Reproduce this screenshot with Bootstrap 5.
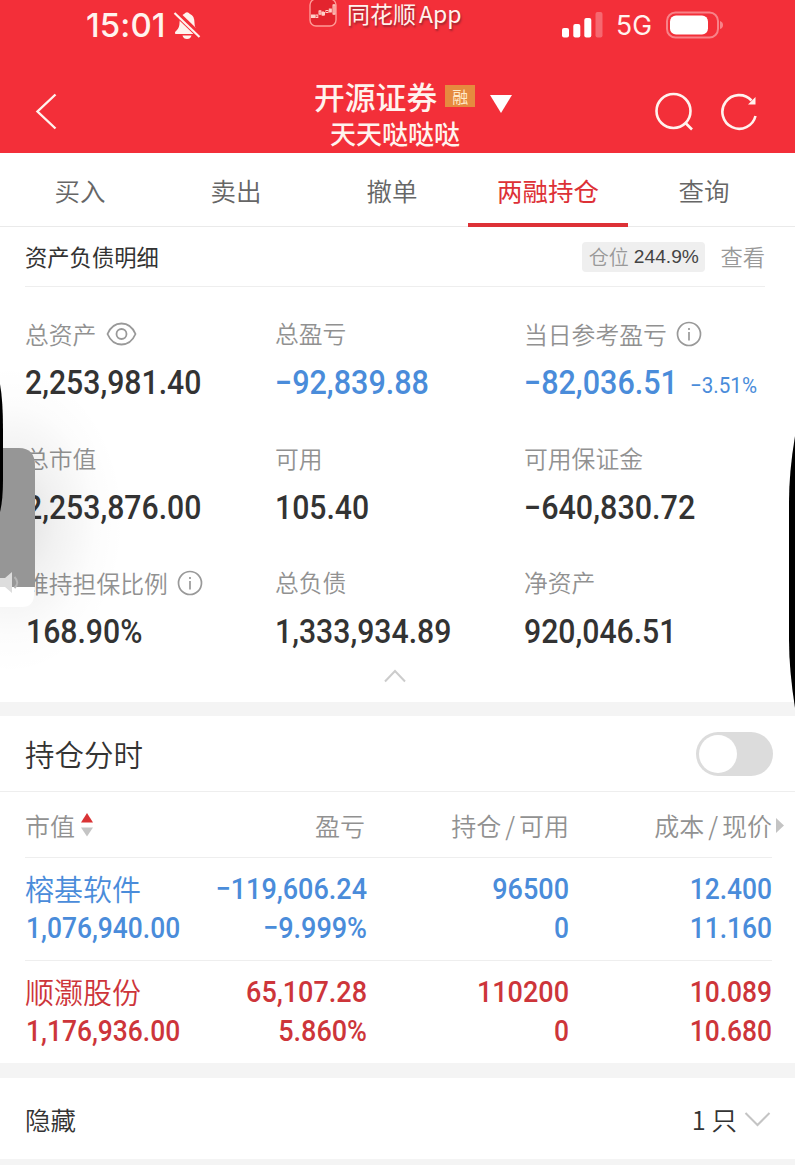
<!DOCTYPE html>
<html lang="zh-CN">
<head>
<meta charset="utf-8">
<meta name="viewport" content="width=device-width, initial-scale=1">
<title>两融持仓</title>
<link href="https://cdn.jsdelivr.net/npm/bootstrap@5.3.0/dist/css/bootstrap.min.css" rel="stylesheet">
<style>
body{font-family:"Liberation Sans","Noto Sans CJK SC",sans-serif;color:#333;background:#fff;height:1165px;line-height:1;overflow:hidden}
svg{display:block;flex:none}
.cjk{font-family:"Noto Sans CJK SC",sans-serif}
.top-area{height:153px;background:#f32f39;color:#fff3ee}
.status{height:50px;padding:0 71px 0 86px}
.clock{font:500 33px/50px Inter,sans-serif;letter-spacing:.1px}
.net{font:400 26.5px/50px Inter,sans-serif}
.watermark{left:309px;top:0;height:27px;font-size:23px;text-shadow:1px 2px 2px #9b2530}
.bar-main{height:103px;padding:0 37px 0 35px}
.broker{font-size:30.8px;font-weight:500;line-height:34px}
.tag{width:30px;height:22px;background:#e68a3f;font-size:16px;line-height:22px;color:#ffe9c8}
.account{font-size:26px;font-weight:500;line-height:30px;padding:4px 0 0 16px}
.tabs{height:74px;padding-left:2px;border-bottom:1px solid #eaeaea}
.tab-item{width:156px;font-size:25.5px;color:#666;line-height:74px;font-weight:350}
.tab-item.active{color:#dd3136;font-weight:400}
.tab-item.active::after{content:"";position:absolute;left:-2px;width:160px;height:4px;bottom:-1px;background:#dd3136}
.sum-head{height:60px;margin:0 30px 0 25px;border-bottom:1px solid #eee;font-size:22.3px}
.pos-tag{height:30px;width:123px;background:#efefef;border-radius:4px;font-size:20px;color:#999;font-weight:350}
.pos-tag .pct{font:19.2px/30px "Liberation Sans",sans-serif;color:#444}
.metrics{display:grid;grid-template-columns:250px 249px 1fr;grid-auto-rows:124.6px;padding:29px 0 0 25px;height:378px}
.metric-name{font-size:23.8px;line-height:34px;color:#919191;font-weight:350;height:36px}
.num{font-family:Roboto,sans-serif;font-weight:500;display:inline-block;transform:scaleX(.915);transform-origin:0 50%;white-space:nowrap}
.num.big{font-size:33px;line-height:36px;margin-top:13px}
.num.big.neg{transform:scaleX(.925)}
.num.small-pct{font-size:22.5px;line-height:36px;font-weight:400;margin-top:15px}
.fold{height:37px}
.band{background:#f4f4f4}
.blue{color:#4a8cda}
.red{color:#cd353a}
.toggle-row{height:76px;padding:0 22px 0 25px;border-bottom:1px solid #eee;font-size:29.5px;font-weight:350}
.toggle{width:77px;height:44px;border-radius:22px;background:#dcdcdc;padding:3px}
.knob{width:38px;height:38px;border-radius:50%;background:#fff}
.hold{display:grid;grid-template-columns:170px 172px 202px 203px;margin:0 23px 0 25px;border-bottom:1px solid #eee}
.hold>div{text-align:right}
.hold>div:first-child{text-align:left}
.hold-head{height:66px;font-size:25px;line-height:66px;color:#919191;font-weight:350}
.hold-row{height:103px;padding-top:11px}
.hold-row .num{font-size:30px;transform:scaleX(.88);transform-origin:100% 50%;line-height:39px;display:block}
.hold-row .num.l{transform-origin:0 50%;margin-left:1px}
.hold-row .num.wide{transform:scaleX(.9)}
.stock{font-size:29px;line-height:39px;height:39px;font-weight:350}
.last-row{height:81px;padding:0 24px 0 25px;font-size:25.5px;font-weight:350}
.edge{left:0;top:350px}
.edge-r{right:0;top:420px}
</style>
</head>
<body class="position-relative">
<header class="top-area cjk">
  <div class="status d-flex justify-content-between align-items-center">
    <div class="d-flex align-items-center">
      <span class="clock">15:01</span>
      <svg style="margin-left:6px" width="30" height="30" viewBox="0 0 30 30"><path d="M3.500 24Q2 22.500 4.500 20.500Q7.500 18 7.500 13C7.500 8 9 5 12 4Q15 .5 18 4C21 5 22.500 8 22.500 13Q22.500 18 25.500 20.500Q28 22.500 26.500 24Z" fill="currentColor"/><path d="M10.500 25.500H19.500Q18.500 29 15 29T10.500 25.500Z" fill="currentColor"/><path d="M2.500 1.500L28.500 26.500" stroke="#f32f39" stroke-width="6"/><path d="M2.500 3L27.500 27" stroke="currentColor" stroke-width="2.200"/></svg>
    </div>
    <div class="d-flex align-items-center">
      <svg width="42" height="26" viewBox="0 0 42 26" fill="#fff"><rect x="0" y="16" width="7" height="9.500" rx="2"/><rect x="11.300" y="12" width="7" height="13.500" rx="2"/><rect x="22.300" y="6" width="7" height="19.500" rx="2"/><rect x="33.500" y="0" width="7" height="25.500" rx="2" opacity=".28"/></svg>
      <span class="net ps-1" style="margin:0 14px 0 8px">5G</span>
      <svg width="58" height="28" viewBox="0 0 58 28"><rect x="1" y="1.500" width="51" height="25" rx="8.500" fill="none" stroke="#fff" stroke-width="2" opacity=".4"/><rect x="4" y="4.500" width="38" height="19" rx="6" fill="#fff"/><path d="M54 10Q57 11 57 14T54 18Z" fill="#fff" opacity=".4"/></svg>
    </div>
  </div>
  <div class="watermark position-absolute d-flex align-items-center">
    <svg width="28" height="28" viewBox="0 0 28 28" fill="none" stroke="#ffd0c8"><rect x="1" y="-1" width="26" height="27" rx="6" fill="#e3242e" stroke="#ff9a96" stroke-width="1.400"/><path d="M3 16.500H6M25 4V15M14 11V16M11 10V15" stroke-width="1"/><rect x="2.500" y="15" width="3" height="2.500" fill="#ffd0c8"/><rect x="6.800" y="15" width="2" height="2.500"/><rect x="10" y="11" width="2" height="3"/><rect x="13" y="12.500" width="2.500" height="2.500" fill="#ffd0c8"/><rect x="17" y="10.500" width="2" height="2"/><rect x="20.300" y="9" width="2" height="3" fill="#ffd0c8"/><rect x="24" y="5" width="2" height="9"/></svg>
    <span style="margin-left:10px;line-height:27px;white-space:nowrap">同花顺<span style="margin-left:3px">App</span></span>
  </div>
  <div class="bar-main d-flex justify-content-between position-relative">
    <svg class="mt-5" width="24" height="40" viewBox="0 0 24 40" style="transform:translateY(-7px)"><path d="M20.500 3.500L2.500 20.500L20.500 37.500" fill="none" stroke="currentColor" stroke-width="2.400"/></svg>
    <div class="position-absolute start-0 top-0 pt-4" style="padding-left:314px">
      <div class="d-flex align-items-center mt-1" style="gap:8px">
        <span class="broker">开源证券</span><span class="tag text-center">融</span>
        <svg style="margin:16px 0 0 6px" width="24" height="20" viewBox="0 0 24 20"><path d="M1 1H23L12 19Z" fill="#fff"/></svg>
      </div>
      <div class="account">天天哒哒哒</div>
    </div>
    <div class="d-flex pt-5" style="gap:26px">
      <svg width="40" height="40" viewBox="0 0 40 40" fill="none" stroke="currentColor" stroke-width="2.600" style="margin-top:-6px"><circle cx="19.500" cy="19" r="17"/><path d="M31.500 31L38 37.500"/></svg>
      <svg width="38" height="40" viewBox="0 0 38 40" fill="none" stroke="currentColor" stroke-width="2.600" style="margin-top:-6px"><path d="M35.500 24A16.800 16.800 0 1 1 31.500 8.500"/><path d="M35.500 5V12.500H28Z" fill="currentColor" stroke="none"/></svg>
    </div>
  </div>
</header>

<nav class="tabs d-flex text-center cjk">
  <div class="tab-item">买入</div><div class="tab-item">卖出</div><div class="tab-item">撤单</div>
  <div class="tab-item active position-relative">两融持仓</div><div class="tab-item">查询</div>
</nav>

<section>
  <div class="sum-head d-flex align-items-center cjk">
    <span>资产负债明细</span>
    <span class="pos-tag ms-auto d-flex align-items-center justify-content-center"><span>仓位</span><span class="pct" style="margin-left:5px">244.9%</span></span>
    <span style="margin-left:15px;color:#999;font-weight:350">查看</span>
  </div>
  <div class="metrics">
    <div><div class="metric-name cjk d-flex align-items-center">总资产
      <svg style="margin-left:10px" width="31" height="24" viewBox="0 0 31 24" fill="none" stroke="#999" stroke-width="1.800"><path d="M1.500 12C4.500 5 10 1.500 15.500 1.500S26.500 5 29.500 12C26.500 19 21 22.500 15.500 22.500S4.500 19 1.500 12Z"/><circle cx="15.500" cy="12" r="5"/></svg></div>
      <span class="num big">2,253,981.40</span></div>
    <div><div class="metric-name cjk">总盈亏</div><span class="num big neg blue">−92,839.88</span></div>
    <div><div class="metric-name cjk d-flex align-items-center">当日参考盈亏
      <svg style="margin-left:9px" width="26" height="26" viewBox="0 0 26 26" fill="none" stroke="#999" stroke-width="1.700"><circle cx="13" cy="13" r="11.500"/><path d="M13 7V9M13 11V19.500"/></svg></div>
      <div class="d-flex"><span class="num big neg blue">−82,036.51</span><span class="num small-pct blue">−3.51%</span></div></div>
    <div><div class="metric-name cjk">总市值</div><span class="num big">2,253,876.00</span></div>
    <div><div class="metric-name cjk">可用</div><span class="num big">105.40</span></div>
    <div><div class="metric-name cjk">可用保证金</div><span class="num big neg">−640,830.72</span></div>
    <div><div class="metric-name cjk d-flex align-items-center">维持担保比例
      <svg style="margin-left:9px" width="26" height="26" viewBox="0 0 26 26" fill="none" stroke="#999" stroke-width="1.700"><circle cx="13" cy="13" r="11.500"/><path d="M13 7V9M13 11V19.500"/></svg></div>
      <span class="num big" style="margin-left:1px">168.90%</span></div>
    <div><div class="metric-name cjk">总负债</div><span class="num big">1,333,934.89</span></div>
    <div><div class="metric-name cjk">净资产</div><span class="num big">920,046.51</span></div>
  </div>
  <div class="fold d-flex justify-content-center"><svg style="margin:4px 6px 0 0" width="24" height="14" viewBox="0 0 24 14"><path d="M2 12.500L12 2L22 12.500" fill="none" stroke="#ccc" stroke-width="2"/></svg></div>
</section>

<div class="band" style="height:14px"></div>

<section>
  <div class="toggle-row cjk d-flex align-items-center justify-content-between"><span>持仓分时</span><span class="toggle"><span class="knob d-block"></span></span></div>
  <div class="hold hold-head cjk">
    <div class="d-flex align-items-center">市值<svg style="margin-left:5px" width="14" height="26" viewBox="0 0 14 26"><path d="M1 10.500L7 1L13 10.500Z" fill="#d93335"/><path d="M1 15.500H13L7 24.500Z" fill="#c4c4c4"/></svg></div>
    <div style="padding-right:2px">盈亏</div><div>持仓<span class="px-1">/</span>可用</div>
    <div class="position-relative">成本<span class="px-1">/</span>现价<svg class="position-absolute" style="right:-12px;top:26px" width="8" height="15" viewBox="0 0 8 15"><path d="M0 0L8 7.500L0 15Z" fill="#c4c4c4"/></svg></div>
  </div>
  <div class="hold hold-row blue">
    <div><div class="stock cjk">榕基软件</div><span class="num l">1,076,940.00</span></div>
    <div><span class="num wide">−119,606.24</span><span class="num wide">−9.999%</span></div>
    <div><span class="num wide">96500</span><span class="num">0</span></div>
    <div><span class="num">12.400</span><span class="num">11.160</span></div>
  </div>
  <div class="hold hold-row red border-bottom-0">
    <div><div class="stock cjk">顺灏股份</div><span class="num l">1,176,936.00</span></div>
    <div><span class="num wide">65,107.28</span><span class="num wide">5.860%</span></div>
    <div><span class="num wide">110200</span><span class="num">0</span></div>
    <div><span class="num">10.089</span><span class="num">10.680</span></div>
  </div>
</section>

<div class="band" style="height:15px;margin-top:-1px"></div>
<div class="last-row cjk d-flex align-items-center"><span>隐藏</span><span class="ms-auto">1 只</span>
  <svg style="margin-left:7px" width="27" height="16" viewBox="0 0 27 16"><path d="M1.500 2L13.500 14L25.500 2" fill="none" stroke="#c4c4c4" stroke-width="2"/></svg></div>
<div class="band" style="height:7px"></div>

<!-- floating sound panel peeking in from the left edge, with its shadow -->
<svg class="edge position-absolute" width="140" height="352" viewBox="0 0 140 352">
  <defs><radialGradient id="sh"><stop offset="0" stop-color="#000" stop-opacity=".13"/><stop offset=".4" stop-color="#000" stop-opacity=".055"/><stop offset=".75" stop-color="#000" stop-opacity=".012"/><stop offset="1" stop-color="#000" stop-opacity="0"/></radialGradient></defs>
  <ellipse cx="10" cy="170" rx="115" ry="155" fill="url(#sh)"/>
  <path d="M0 230H34V244Q34 257 22 257H0Z" fill="#fff"/>
  <path d="M0 98H19Q35 98 35 116V237H0Z" fill="#969696"/>
  <path d="M0 228H5L12 222V243L5 237H0Z" fill="#ddd"/><path d="M14.500 227Q20 232.500 14.500 238" fill="none" stroke="#b5b5b5" stroke-width="2"/>
  <path d="M0 34Q3 50 3 80V130Q3 150 0 162Z" fill="#000"/>
</svg>
<svg class="edge-r position-absolute" width="7" height="290" viewBox="0 0 7 290"><path d="M7 16Q1 52 1 82V220Q1 250 7 288Z" fill="#000"/></svg>
<script src="https://cdn.jsdelivr.net/npm/bootstrap@5.3.0/dist/js/bootstrap.bundle.min.js"></script>
</body>
</html>
